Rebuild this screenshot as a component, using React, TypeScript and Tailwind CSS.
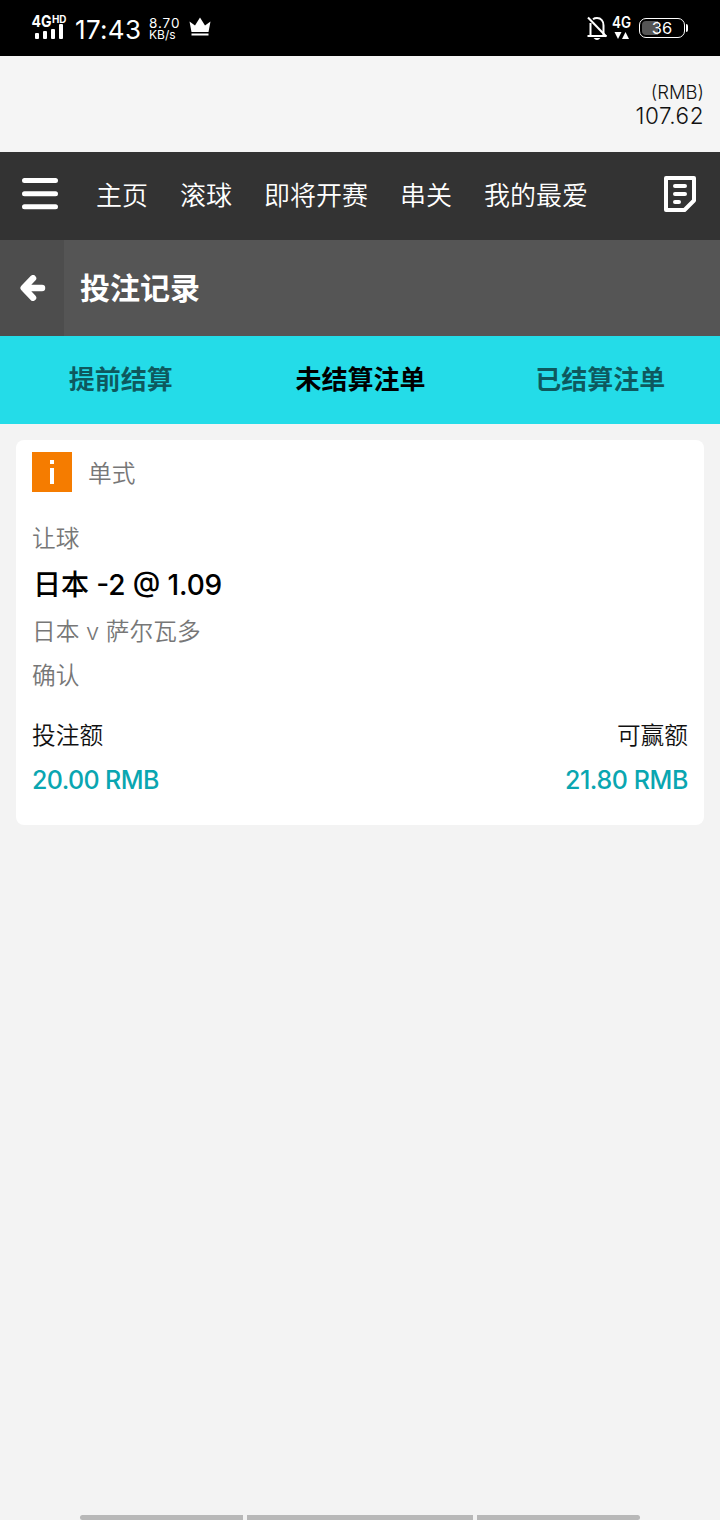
const navItems = ['主页', '滚球', '即将开赛', '串关', '我的最爱']

const tabs = [
  { label: '提前结算', active: false },
  { label: '未结算注单', active: true },
  { label: '已结算注单', active: false },
]

function SignalIcon() {
  return (
    <svg width="36" height="32" viewBox="0 -4 36 32" fill="white" className="-mt-1 shrink-0 overflow-visible">
      <text x="0.5" y="13" fontSize="16.5" fontWeight="700" textLength="20" lengthAdjust="spacingAndGlyphs">4G</text>
      <text x="21" y="8.5" fontSize="10" fontWeight="700" textLength="14.5" lengthAdjust="spacingAndGlyphs">HD</text>
      <rect x="4" y="19" width="4" height="6" rx="1" />
      <rect x="12" y="17" width="4" height="8" rx="1" />
      <rect x="20" y="15" width="4" height="10" rx="1" />
      <rect x="28" y="10" width="4" height="15" rx="1" />
    </svg>
  )
}

function CrownIcon() {
  return (
    <svg width="22" height="20" viewBox="0 0 22 20" fill="white" className="shrink-0">
      <path d="M0.5 4.5L6 8.5L11 0.5L16 8.5L21.5 4.5L19.5 15H2.5Z" />
      <rect x="2.5" y="16.5" width="17" height="2" />
    </svg>
  )
}

function BellOffIcon() {
  return (
    <svg width="20" height="24" viewBox="0 0 20 24" fill="none" stroke="white" strokeWidth="2" className="shrink-0">
      <path d="M3.5 20V7M6 3.2C7 2.4 8.5 2 10 2C14 2 16.5 5 16.5 9.5V20" />
      <path d="M0.5 20H19.5" />
      <path d="M1 1.5L19.3 20.5" />
      <path d="M6.5 22Q10 26 13.5 22Z" fill="white" stroke="none" />
    </svg>
  )
}

function DataIcon() {
  return (
    <svg width="20" height="30" viewBox="0 -4 20 30" fill="white" className="-mt-1 shrink-0 overflow-visible">
      <text x="0" y="13" fontSize="15.5" fontWeight="600" textLength="19" lengthAdjust="spacingAndGlyphs">4G</text>
      <path d="M2.5 17H9.5L6 24Z" />
      <path d="M10 24H17L13.5 17Z" />
    </svg>
  )
}

function StatusBar() {
  return (
    <div className="flex h-14 items-center bg-black pl-[31px] pr-8 text-white">
      <SignalIcon />
      <span className="ml-2 mt-1 w-[66px] whitespace-nowrap text-[26px] leading-8 tracking-[0.3px]">17:43</span>
      <div className="ml-2 mt-0.5 w-8 whitespace-nowrap leading-[12.5px]">
        <p className="text-[13.5px] tracking-[0.9px]">8.70</p>
        <p className="text-[12px]">KB/s</p>
      </div>
      <div className="ml-2 -mt-0.5">
        <CrownIcon />
      </div>
      <div className="ml-auto flex items-center">
        <BellOffIcon />
        <div className="ml-[5px]">
          <DataIcon />
        </div>
        <div className="ml-[7px] flex h-5 w-[46px] rounded-[7px] border border-white p-0.5">
          <div className="relative flex w-full items-center justify-center">
            <div className="absolute inset-y-0 left-0 w-4 rounded-l-[4px] bg-[#555]" />
            <span className="relative text-[16.5px] leading-4">36</span>
          </div>
        </div>
        <div className="ml-px h-2 w-[2px] rounded-r bg-white" />
      </div>
    </div>
  )
}

function NavBar() {
  return (
    <nav className="flex h-[88px] items-center bg-[#333] pl-[22px] pr-6 text-white">
      <svg width="36" height="32" viewBox="0 0 36 32" className="-mt-[5px] shrink-0">
        <path d="M2.5 2.6H33.5M2.5 15.7H33.5M2.5 28.8H33.5" stroke="white" strokeWidth="5" strokeLinecap="round" />
      </svg>
      <div className="ml-[38px] flex gap-8 text-[26px] font-[350] leading-[44px]">
        {navItems.map((item) => (
          <a key={item} className="whitespace-nowrap">{item}</a>
        ))}
      </div>
      <svg width="32" height="36" viewBox="0 0 32 36" fill="none" stroke="white" className="-mt-1 ml-auto shrink-0">
        <path d="M2 2H30V24.5L20.5 34H2Z" strokeWidth="4" strokeLinejoin="round" />
        <path d="M11 10H21M11 18H21M11 26H15" strokeWidth="4" strokeLinecap="round" />
      </svg>
    </nav>
  )
}

function BetCard() {
  return (
    <div className="mx-4 mt-4 rounded-lg bg-white px-4 pb-6 text-[23.7px] font-[350] leading-[44px] text-[#777]">
      <div className="flex h-[65px] items-center">
        <div className="-mt-0.5 flex size-10 shrink-0 items-center justify-center bg-[#f57c00]">
          <svg width="6" height="24" viewBox="0 0 6 24" fill="white">
            <rect x="1" y="0" width="4" height="4" />
            <rect x="1" y="8" width="4" height="16" />
          </svg>
        </div>
        <span className="ml-4 mt-[3px]">单式</span>
      </div>

      <p className="mt-3">让球</p>
      <p className="pl-px text-[28px] font-medium leading-[49px] tracking-[-0.1px] text-black [font-feature-settings:'case']">日本 -2 @ 1.09</p>
      <p>日本 v 萨尔瓦多</p>
      <p>确认</p>

      {/* Stake / returns */}
      <div className="mt-4 flex justify-between text-[#111]">
        <span>投注额</span>
        <span>可赢额</span>
      </div>
      <div className="-mb-px flex justify-between text-[25px] font-medium text-[#0aa6b1]">
        <span className="tracking-[-0.6px]">20.00 RMB</span>
        <span className="tracking-[-0.4px]">21.80 RMB</span>
      </div>
    </div>
  )
}

export default function App() {
  return (
    <div className="flex h-[1520px] w-[720px] flex-col overflow-hidden bg-[#f3f3f3] font-['Inter','Noto_Sans_CJK_SC',sans-serif]">
      <StatusBar />

      {/* Balance */}
      <div className="flex h-24 flex-col items-end justify-center bg-[#f5f5f5] pr-4 font-light text-[#111]">
        <span className="text-[18.5px] leading-6">(RMB)</span>
        <span className="text-[22.5px] leading-6 tracking-[0.55px]">107.62</span>
      </div>

      <NavBar />

      <header className="flex h-24 items-center bg-[#555] text-white">
        <div className="flex h-full w-16 items-center justify-center bg-[#4d4d4d] pl-0.5">
          <svg width="26" height="26" viewBox="0 0 26 26" fill="none" stroke="white" strokeWidth="6.5" strokeLinecap="round" strokeLinejoin="round">
            <path d="M13 3.3L3.7 13L13 22.7M4 13H22" />
          </svg>
        </div>
        <h1 className="ml-4 text-[30px] font-bold leading-[44px]">投注记录</h1>
      </header>

      <div className="grid h-[88px] grid-cols-3 items-center bg-[#24dce8] pl-px text-center text-[26px] font-bold leading-[44px]">
        {tabs.map((tab) => (
          <span key={tab.label} className={tab.active ? 'text-black' : 'text-black/60'}>
            {tab.label}
          </span>
        ))}
      </div>

      <BetCard />

      {/* Gesture bar */}
      <div className="mx-20 mt-auto flex h-[5px] gap-1">
        <div className="w-[163px] rounded-l-full bg-[#b8b8b8]" />
        <div className="flex-1 bg-[#b8b8b8]" />
        <div className="w-[163px] rounded-r-full bg-[#b8b8b8]" />
      </div>
    </div>
  )
}
